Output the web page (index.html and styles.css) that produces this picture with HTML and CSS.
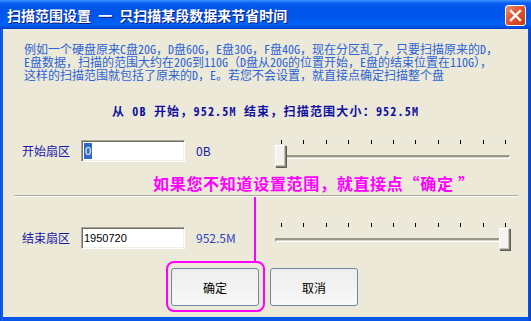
FILE: index.html
```html
<!DOCTYPE html>
<html lang="zh-CN">
<head>
    <meta charset="UTF-8">
    <title>扫描范围设置</title>
    <link rel="stylesheet" href="styles.css">
</head>
<body>
    <div class="window">
        <div class="titlebar">
            <span class="title">扫描范围设置 <span class="dash">一</span> 只扫描某段数据来节省时间</span>
            <span class="close">
                <svg width="13" height="13" viewBox="0 0 13 13"><path d="M2 2 L11 11 M11 2 L2 11" stroke="#fff" stroke-width="2.4" stroke-linecap="square"/></svg>
            </span>
        </div>
        <div class="client">
            <p class="desc">例如一个硬盘原来C盘20G，D盘60G，E盘30G，F盘40G，现在分区乱了，只要扫描原来的D，<br>E盘数据，扫描的范围大约在20G到110G（D盘从20G的位置开始，E盘的结束位置在110G），<br>这样的扫描范围就包括了原来的D，E。若您不会设置，就直接点确定扫描整个盘</p>

            <p class="summary">从 0B 开始，952.5M 结束，扫描范围大小：952.5M</p>

            <div class="row">
                <span class="label">开始扇区</span>
                <div class="field"><span class="selected">0</span></div>
                <span class="value">0B</span>
                <div class="slider">
                    <div class="ticks"><i></i><i></i><i></i><i></i><i></i><i></i><i></i><i></i><i></i><i></i><i></i></div>
                    <div class="track"></div>
                    <div class="thumb" style="left: 0px;"></div>
                </div>
            </div>

            <p class="hint">如果您不知道设置范围，就直接点“确定 ”</p>
            <div class="separator"></div>

            <div class="row row-end">
                <span class="label">结束扇区</span>
                <div class="field">1950720</div>
                <span class="value value-light">952.5M</span>
                <div class="slider">
                    <div class="ticks"><i></i><i></i><i></i><i></i><i></i><i></i><i></i><i></i><i></i><i></i><i></i></div>
                    <div class="track"></div>
                    <div class="thumb" style="left: 224px;"></div>
                </div>
            </div>

            <div class="buttons">
                <div class="callout">
                    <span class="callout-line"></span>
                    <button class="btn">确定</button>
                </div>
                <button class="btn">取消</button>
            </div>
        </div>
    </div>
</body>
</html>
```

FILE: styles.css
```css
* {
    box-sizing: border-box;
}
body {
    margin: 0;
    width: 531px;
    height: 321px;
    overflow: hidden;
    font-family: "Noto Sans CJK SC", "Liberation Sans", sans-serif;
    font-size: 12px;
}
.window {
    width: 531px;
    height: 321px;
    display: flex;
    flex-direction: column;
    background: linear-gradient(to right, #0838D0 0, #1466EE 1px, #0856E8 3px, #0856E8 528px, #0840D0 530px);
}
.titlebar {
    height: 29px;
    display: flex;
    align-items: center;
    justify-content: space-between;
    padding: 0 5px 0 7px;
    background: linear-gradient(to bottom, #3D95FF 0, #0A5FF0 3px, #0055EA 8px, #0057EC 18px, #0062F8 24px, #0050E0 27px, #003FC8 29px);
}
.title {
    color: #fff;
    font-size: 14px;
    font-weight: bold;
    white-space: nowrap;
    text-shadow: 1px 1px 0 #0A1A80;
}
.dash {
    margin: 0 4px;
}
.close {
    width: 21px;
    height: 21px;
    margin-top: 1px;
    border: 1px solid #fff;
    border-radius: 3px;
    background: linear-gradient(135deg, #F09070 0%, #E0542E 45%, #C83A18 100%);
    display: flex;
    align-items: center;
    justify-content: center;
}
.client {
    flex: 1;
    margin: 0 3px 4px 3px;
    background-color: #ECE9D8;
    display: flex;
    flex-direction: column;
}
.desc {
    margin: 13px 0 0 21px;
    line-height: 13px;
    font-family: "Noto Sans Mono CJK SC", "Noto Sans CJK SC", monospace;
    color: #2B63D6;
    white-space: nowrap;
}
.summary {
    margin: 22px 0 0 0;
    line-height: 16px;
    text-align: center;
    font-family: "Noto Sans Mono CJK SC", "Noto Sans CJK SC", monospace;
    font-weight: bold;
    letter-spacing: 1.2px;
    color: #1010A0;
}
.row {
    display: flex;
    align-items: flex-start;
    margin-top: 21px;
    padding-left: 19px;
}
.label {
    width: 59px;
    line-height: 22px;
    color: #1818A8;
}
.field {
    width: 104px;
    height: 22px;
    padding: 2px 2px;
    background-color: #fff;
    border: 1px solid;
    border-color: #A8A594 #fff #fff #A8A594;
    box-shadow: inset 1px 1px 0 #716F64, inset -1px -1px 0 #F1EFE2;
    font-family: "Liberation Sans", sans-serif;
    font-size: 11px;
    line-height: 16px;
    color: #000;
}
.selected {
    display: inline-block;
    padding: 0 1px;
    background-color: #316AC5;
    color: #fff;
}
.value {
    width: 79px;
    margin-left: 11px;
    line-height: 22px;
    color: #1818A8;
}
.value-light {
    color: #2E44C6;
}
.slider {
    position: relative;
    width: 235px;
    height: 28px;
}
.ticks {
    display: flex;
    justify-content: space-between;
    height: 4px;
    margin: 0 4px 0 6px;
}
.ticks i {
    width: 1px;
    height: 4px;
    background-color: #000;
}
.track {
    height: 4px;
    margin-top: 11px;
    border-top: 2px solid #9A978B;
    border-left: 1px solid #9A978B;
    border-bottom: 1px solid #fff;
    border-right: 1px solid #fff;
    background-color: #D8D5C8;
}
.thumb {
    position: absolute;
    top: 5px;
    width: 11px;
    height: 22px;
    background-color: #F4F3EE;
    border: 1px solid;
    border-color: #fff #85827A #85827A #fff;
    box-shadow: inset -1px -1px 0 #C5C2B8, 1px 1px 0 #5E5C55;
}
.hint {
    margin: 5px 0 0 150px;
    line-height: 20px;
    font-size: 16px;
    font-weight: bold;
    letter-spacing: 0.7px;
    color: #FF00FF;
    white-space: nowrap;
}
.separator {
    height: 2px;
    margin: 2px 10px 0 11px;
    border-top: 1px solid #ACA899;
    border-bottom: 1px solid #fff;
}
.row-end {
    margin-top: 30px;
}
.row-end .slider {
    margin-top: -4px;
}
.buttons {
    display: flex;
    align-items: flex-start;
    gap: 5px;
    margin: 10px 0 0 163px;
}
.callout {
    position: relative;
    padding: 5px 4px 4px 3px;
    border: 2px solid #FF00FF;
    border-radius: 8px;
}
.callout-line {
    position: absolute;
    left: 86px;
    bottom: 100%;
    width: 2px;
    height: 66px;
    background-color: #FF00FF;
}
.btn {
    width: 88px;
    height: 38px;
    border: 1px solid #6F8AA2;
    border-radius: 3px;
    background: linear-gradient(to bottom, #EEEEEE 0%, #F3F3F3 60%, #F9F9F9 100%);
    font-family: "Noto Sans CJK SC", sans-serif;
    font-size: 12px;
    color: #000;
    padding: 0;
}
.buttons > .btn {
    margin-top: 7px;
}
```
